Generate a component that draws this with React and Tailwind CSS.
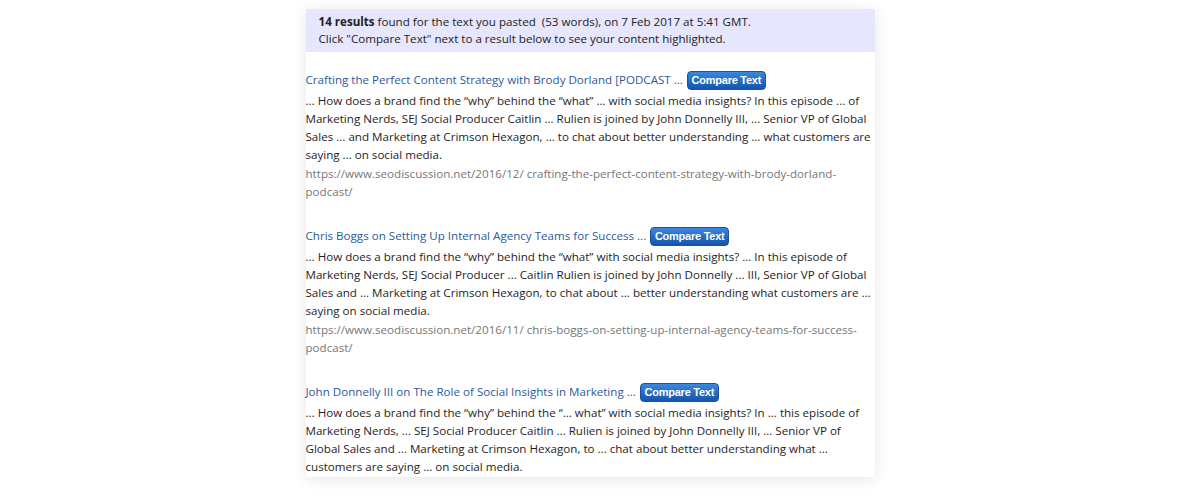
import React from "react";

const results = [
  {
    title: "Crafting the Perfect Content Strategy with Brody Dorland [PODCAST ...",
    body: [
      "... How does a brand find the “why” behind the “what” ... with social media insights? In this episode ... of",
      "Marketing Nerds, SEJ Social Producer Caitlin ... Rulien is joined by John Donnelly III, ... Senior VP of Global",
      "Sales ... and Marketing at Crimson Hexagon, ... to chat about better understanding ... what customers are",
      "saying ... on social media.",
    ],
    url: [
      "https://www.seodiscussion.net/2016/12/ crafting-the-perfect-content-strategy-with-brody-dorland-",
      "podcast/",
    ],
  },
  {
    title: "Chris Boggs on Setting Up Internal Agency Teams for Success ...",
    body: [
      "... How does a brand find the “why” behind the “what” with social media insights? ... In this episode of",
      "Marketing Nerds, SEJ Social Producer ... Caitlin Rulien is joined by John Donnelly ... III, Senior VP of Global",
      "Sales and ... Marketing at Crimson Hexagon, to chat about ... better understanding what customers are ...",
      "saying on social media.",
    ],
    url: [
      "https://www.seodiscussion.net/2016/11/ chris-boggs-on-setting-up-internal-agency-teams-for-success-",
      "podcast/",
    ],
  },
  {
    title: "John Donnelly III on The Role of Social Insights in Marketing ...",
    body: [
      "... How does a brand find the “why” behind the “... what” with social media insights? In ... this episode of",
      "Marketing Nerds, ... SEJ Social Producer Caitlin ... Rulien is joined by John Donnelly III, ... Senior VP of",
      "Global Sales and ... Marketing at Crimson Hexagon, to ... chat about better understanding what ...",
      "customers are saying ... on social media.",
    ],
    url: null,
  },
];

function CompareButton() {
  return (
    <button
      className="ml-[4px] inline-flex h-[19px] w-[79px] items-center justify-center rounded-[4px] border border-[#1a509c] bg-gradient-to-b from-[#3a88de] to-[#1455ad] text-[11px] font-bold leading-none tracking-[-0.25px] text-white"
      style={{ fontFamily: '"Liberation Sans", Arial, sans-serif' }}
    >
      Compare Text
    </button>
  );
}

export default function App() {
  return (
    <div className="min-h-[497px] bg-white pt-[9px]" style={{ fontFamily: '"Open Sans", sans-serif' }}>
      <div className="mx-auto w-[569px] bg-white pb-[1px] shadow-[0_2px_14px_rgba(0,0,0,0.10)]">
        <div className="bg-[#e6e6fd] px-[13px] pb-[5px] pt-[4px] text-[11.6px] leading-[17px] text-[#222]">
          <div className="whitespace-nowrap">
            <b>14 results</b> found for the text you pasted&nbsp; (53 words), on 7 Feb 2017 at 5:41 GMT.
          </div>
          <div className="whitespace-nowrap">Click "Compare Text" next to a result below to see your content highlighted.</div>
        </div>
        <div className="pt-[19px]">
          {results.map((r, i) => (
            <div key={i} className={i > 0 ? "mt-[27px]" : ""}>
              <div className="flex h-[18px] items-center text-[11.6px] leading-[18px]">
                <span className="whitespace-nowrap text-[#2b5a9c]">{r.title}</span>
                <CompareButton />
              </div>
              <div className="mt-[3px] text-[11.6px] leading-[18px] text-[#1e1e1e]">
                {r.body.map((l, j) => (
                  <div key={j} className="whitespace-nowrap">{l}</div>
                ))}
              </div>
              {r.url && (
                <div className="mt-[1px] text-[11.6px] leading-[17.5px] text-[#777]">
                  {r.url.map((l, j) => (
                    <div key={j} className="whitespace-nowrap">{l}</div>
                  ))}
                </div>
              )}
            </div>
          ))}
        </div>
      </div>
    </div>
  );
}
